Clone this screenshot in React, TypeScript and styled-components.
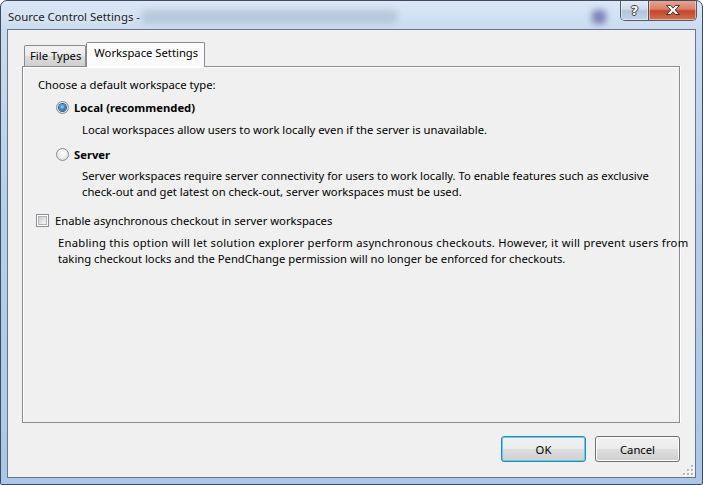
import React from "react";
import styled, { createGlobalStyle } from "styled-components";

const FS = "11.25px";

const Global = createGlobalStyle`
  html, body { margin: 0; padding: 0; background: #fff; }
  body { font-family: "Noto Sans", "Open Sans", sans-serif; font-size: ${FS}; color: #000; }
  * { box-sizing: border-box; }
`;

const Window = styled.div`
  width: 703px;
  height: 485px;
  border: 1px solid #3d4b5c;
  border-radius: 7px 7px 2px 2px;
  background: linear-gradient(180deg, #dbe7f6 0%, #c9dbf1 6%, #b8cfea 40%, #aac6e8 100%);
  display: flex;
  flex-direction: column;
  padding: 0 6px 6px 6px;
  overflow: hidden;
`;

const TitleBar = styled.div`
  height: 28px;
  display: flex;
  align-items: flex-start;
`;

const TitleText = styled.div`
  margin-top: 8px;
  padding-left: 1px;
  font-size: 11.4px;
  line-height: 16px;
  color: #1a1a1a;
  text-shadow: 0 0 6px rgba(255, 255, 255, 0.9);
  white-space: nowrap;
`;

const Blur = styled.div<{ $w: number; $c: string }>`
  width: ${(p) => p.$w}px;
  height: 14px;
  margin-top: 9px;
  background: ${(p) => p.$c};
  filter: blur(3px);
  border-radius: 4px;
`;

const Spacer = styled.div`
  flex: 1;
`;

const CaptionGroup = styled.div`
  display: flex;
  margin-top: -1px;
  margin-right: -1px;
  border: 1px solid #4b5a6c;
  border-top: none;
  border-radius: 0 0 5px 5px;
  overflow: hidden;
  height: 21px;
`;

const CaptionBtn = styled.div<{ $w: number; $close?: boolean }>`
  width: ${(p) => p.$w}px;
  height: 100%;
  display: flex;
  align-items: center;
  justify-content: center;
  font-family: "DejaVu Sans", sans-serif;
  font-weight: bold;
  font-size: 13px;
  color: #fff;
  background: ${(p) =>
    p.$close
      ? "linear-gradient(180deg, #e9a897 0%, #d8806a 45%, #c5452a 55%, #d4704f 100%)"
      : "linear-gradient(180deg, #e6edf6 0%, #cfdbea 45%, #b3c3d8 55%, #c3d3e8 100%)"};
  border-left: ${(p) => (p.$close ? "1px solid #5b4b4b" : "none")};
  text-shadow: 1px 0 #3b3b3b, -1px 0 #3b3b3b, 0 1px #3b3b3b, 0 -1px #3b3b3b;
  box-shadow: inset 0 0 0 1px rgba(255, 255, 255, 0.45);
`;

const Client = styled.div`
  flex: 1;
  position: relative;
  background: #f0f0f0;
  border: 1px solid #6b7684;
  display: flex;
  flex-direction: column;
  padding: 12px 15px 15px 14px;
`;

const TabStrip = styled.div`
  display: flex;
  align-items: flex-end;
  height: 24px;
  padding-left: 2px;
  position: relative;
  z-index: 1;
`;

const Tab = styled.div<{ $active?: boolean }>`
  height: ${(p) => (p.$active ? 25 : 21)}px;
  margin-bottom: ${(p) => (p.$active ? -1 : 0)}px;
  padding: ${(p) => (p.$active ? "2px 6px 0 7px" : "2px 4px 0 5px")};
  border: 1px solid #898c95;
  border-bottom: none;
  border-radius: 2px 2px 0 0;
  background: ${(p) =>
    p.$active ? "#fcfcfc" : "linear-gradient(180deg, #f3f3f3 0%, #ebebeb 50%, #dddddd 51%, #cfcfcf 100%)"};
  line-height: 16px;
  font-size: ${FS};
  white-space: nowrap;
`;

const Panel = styled.div`
  flex: 1;
  border: 1px solid #898c95;
  box-shadow: inset 1px 1px 0 #fff, 1px 0 0 #fff;
  background: #f0f0f0;
  padding: 10px 14px 0 13px;
  display: flex;
  flex-direction: column;
`;

const Text = styled.div<{ $indent?: number; $mt?: number }>`
  margin-left: ${(p) => p.$indent ?? 0}px;
  margin-top: ${(p) => p.$mt ?? 0}px;
  font-size: ${FS};
  line-height: 16px;
  white-space: nowrap;
`;

const Wide = styled.span`
  letter-spacing: 0.24px;
`;

const OptionRow = styled.label<{ $indent?: number; $mt?: number; $gap: number }>`
  display: flex;
  align-items: center;
  gap: ${(p) => p.$gap}px;
  margin-left: ${(p) => p.$indent ?? 0}px;
  margin-top: ${(p) => p.$mt ?? 0}px;
  height: 16px;
  font-size: ${FS};
  white-space: nowrap;
`;

const Label = styled.span<{ $bold?: boolean }>`
  font-weight: ${(p) => (p.$bold ? 700 : 400)};
`;

const Radio = styled.span<{ $checked?: boolean }>`
  width: 13px;
  height: 13px;
  border-radius: 50%;
  border: 1px solid #8b8c8d;
  background: radial-gradient(circle at 50% 40%, #ffffff 0%, #f0f0f0 45%, #cfcfcf 100%);
  display: flex;
  align-items: center;
  justify-content: center;
  flex: none;
  &::after {
    content: "";
    display: ${(p) => (p.$checked ? "block" : "none")};
    width: 7px;
    height: 7px;
    border-radius: 50%;
    background: radial-gradient(circle at 45% 40%, #a9dbff 0%, #3f90cf 40%, #11457d 100%);
    box-shadow: 0 0 0 1px #2b5f8e;
  }
`;

const Checkbox = styled.span`
  width: 13px;
  height: 13px;
  border: 1px solid #8e8f8f;
  background: #fff;
  padding: 1px;
  flex: none;
  display: flex;
  &::after {
    content: "";
    flex: 1;
    border: 1px solid #b0b4b9;
    background: linear-gradient(135deg, #c9cdd2 0%, #e3e5e8 55%, #f6f6f6 100%);
  }
`;

const ButtonRow = styled.div`
  display: flex;
  justify-content: flex-end;
  gap: 9px;
  margin-top: 13px;
`;

const Button = styled.div<{ $default?: boolean }>`
  width: 85px;
  height: 26px;
  border: 1px solid ${(p) => (p.$default ? "#3c7fb1" : "#707070")};
  border-radius: 3px;
  background: linear-gradient(180deg, #f2f2f2 0%, #ebebeb 48%, #dddddd 52%, #cfcfcf 100%);
  box-shadow: inset 0 0 0 1px ${(p) => (p.$default ? "#48d8fb" : "#fcfcfc")};
  display: flex;
  align-items: center;
  justify-content: center;
  font-size: ${FS};
`;

const Grip = styled.svg`
  position: absolute;
  right: 1px;
  bottom: 1px;
`;

export default function App() {
  const dots: [number, number][] = [
    [8, 0],
    [4, 4],
    [8, 4],
    [0, 8],
    [4, 8],
    [8, 8],
  ];
  return (
    <>
      <Global />
      <Window>
        <TitleBar>
          <TitleText>Source Control Settings -</TitleText>
          <Blur $w={255} $c="#b7c8dc" style={{ marginLeft: 2 }} />
          <Spacer />
          <Blur $w={14} $c="#7c84b8" style={{ marginRight: 14 }} />
          <CaptionGroup>
            <CaptionBtn $w={27}>?</CaptionBtn>
            <CaptionBtn $w={48} $close>
              <svg width="16" height="12" viewBox="0 0 16 12">
                <path
                  d="M1.5 1.5 H5.5 L8 4.2 L10.5 1.5 H14.5 L10.2 6 L14.5 10.5 H10.5 L8 7.8 L5.5 10.5 H1.5 L5.8 6 Z"
                  fill="#fff"
                  stroke="#3b3b3b"
                  strokeWidth="1"
                  strokeLinejoin="round"
                />
              </svg>
            </CaptionBtn>
          </CaptionGroup>
        </TitleBar>
        <Client>
          <TabStrip>
            <Tab>File Types</Tab>
            <Tab $active>Workspace Settings</Tab>
          </TabStrip>
          <Panel>
            <Text $indent={2}>Choose a default workspace type:</Text>
            <OptionRow $indent={20} $mt={6} $gap={5}>
              <Radio $checked />
              <Label $bold>Local (recommended)</Label>
            </OptionRow>
            <Text $indent={46} $mt={7}>
              Local workspaces allow users to work locally even if the server is unavailable.
            </Text>
            <OptionRow $indent={20} $mt={8} $gap={5}>
              <Radio />
              <Label $bold>Server</Label>
            </OptionRow>
            <Text $indent={46} $mt={6}>
              Server workspaces require server connectivity for users to work locally. To enable features such as exclusive
              <br />
              check-out and get latest on check-out, server workspaces must be used.
            </Text>
            <OptionRow $mt={12} $gap={6}>
              <Checkbox />
              <Label>Enable asynchronous checkout in server workspaces</Label>
            </OptionRow>
            <Text $indent={22} $mt={7}>
              <Wide>
                Enabling this option will let solution explorer perform asynchronous checkouts. However, it will prevent users from
              </Wide>
              <br />
              taking checkout locks and the PendChange permission will no longer be enforced for checkouts.
            </Text>
          </Panel>
          <ButtonRow>
            <Button $default>OK</Button>
            <Button>Cancel</Button>
          </ButtonRow>
          <Grip width="11" height="11" viewBox="0 0 11 11">
            {dots.map(([x, y], i) => (
              <g key={i}>
                <rect x={x + 1} y={y + 1} width="2" height="2" fill="#fff" />
                <rect x={x} y={y} width="2" height="2" fill="#b5b8bd" />
              </g>
            ))}
          </Grip>
        </Client>
      </Window>
    </>
  );
}
